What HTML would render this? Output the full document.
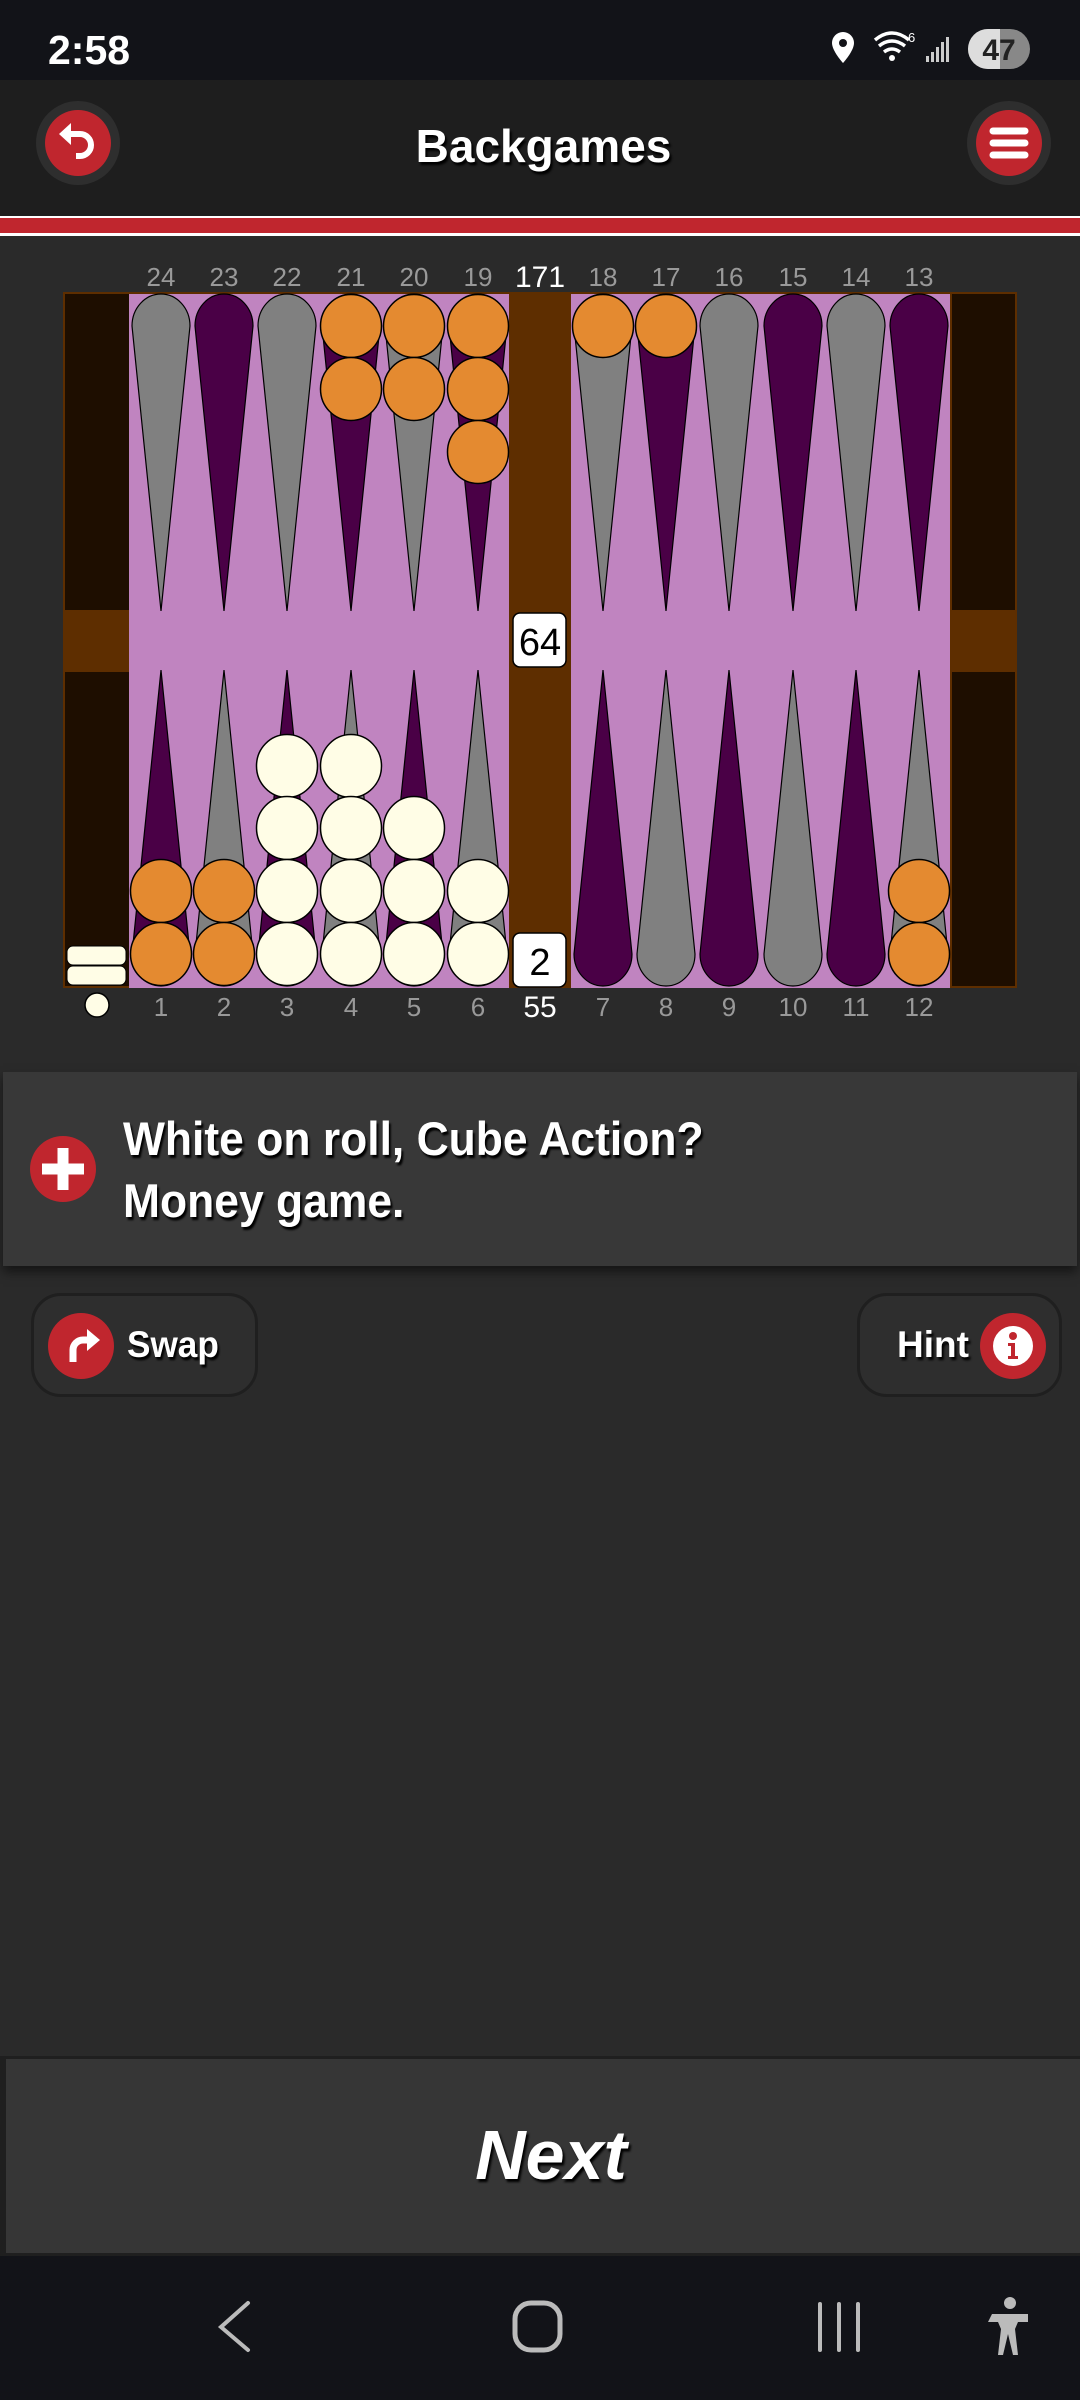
<!DOCTYPE html>
<html><head><meta charset="utf-8"><style>
*{margin:0;padding:0;box-sizing:border-box}
body{width:1080px;height:2400px;background:#2a2a2a;position:relative;overflow:hidden;font-family:"Liberation Sans",sans-serif;color:#fff}
.abs{position:absolute}
.sh{text-shadow:2px 3px 2px #000}
</style></head><body>
<div class="abs" style="left:0;top:0;width:1080px;height:80px;background:#121318"></div>
<div class="abs" style="left:48px;top:27px;font-size:41px;font-weight:bold">2:58</div>
<svg class="abs" style="left:820px;top:24px" width="240" height="50" viewBox="0 0 240 50">
<path d="M23 8a11 11 0 0 1 11 11c0 8-11 20-11 20S12 27 12 19A11 11 0 0 1 23 8z" fill="#fff"/><circle cx="23" cy="19" r="4" fill="#121318"/>
<path d="M55 16q17-14 34 0M59 22q13-10 26 0M64 28q8-6 16 0" stroke="#fff" stroke-width="3.5" fill="none"/><circle cx="72" cy="34" r="3" fill="#fff"/>
<text x="88" y="18" font-size="13" fill="#fff" font-family="Liberation Sans">6</text>
<path d="M106 38h3v-6h-3zM111 38h3v-10h-3zM116 38h3v-15h-3zM121 38h3v-20h-3zM126 38h3v-25h-3z" fill="#ccc"/>
<rect x="148" y="5" width="62" height="40" rx="20" fill="#888"/><path d="M168 5h12v40h-12a20 20 0 0 1 0-40z" fill="#ddd"/>
<text x="179" y="36" font-size="30" font-weight="bold" fill="#222" text-anchor="middle" font-family="Liberation Sans">47</text></svg>
<div class="abs" style="left:0;top:80px;width:1080px;height:136px;background:#1e1e1e"></div>
<svg class="abs" style="left:35px;top:100px" width="86" height="86"><circle cx="43" cy="43" r="42" fill="#2e2e2e"/><circle cx="43" cy="43" r="33" fill="#c0262e"/>
<path d="M33 34h12a11 11 0 0 1 0 22h-4" stroke="#fff" stroke-width="6" fill="none"/><path d="M24 34l12-11v22z" fill="#fff"/></svg>
<svg class="abs" style="left:966px;top:100px" width="86" height="86"><circle cx="43" cy="43" r="42" fill="#2e2e2e"/><circle cx="43" cy="43" r="33" fill="#c0262e"/>
<path d="M27 31h32M27 43h32M27 55h32" stroke="#fff" stroke-width="7" stroke-linecap="round"/></svg>
<div class="abs sh" style="left:0;width:1087px;top:119px;text-align:center;font-size:46px;font-weight:bold">Backgames</div>
<div class="abs" style="left:0;top:216px;width:1080px;height:2px;background:#fff"></div>
<div class="abs" style="left:0;top:218px;width:1080px;height:15px;background:#c0262e"></div>
<div class="abs" style="left:0;top:233px;width:1080px;height:3px;background:#fff"></div>

<svg class="abs" style="left:0;top:250px" width="1080" height="790" viewBox="0 250 1080 790" font-family="Liberation Sans">
<g font-size="26" fill="#999" text-anchor="middle">
<text x="161" y="286">24</text><text x="224" y="286">23</text><text x="287" y="286">22</text><text x="351" y="286">21</text><text x="414" y="286">20</text><text x="478" y="286">19</text>
<text x="603" y="286">18</text><text x="666" y="286">17</text><text x="729" y="286">16</text><text x="793" y="286">15</text><text x="856" y="286">14</text><text x="919" y="286">13</text>
<text x="161" y="1016">1</text><text x="224" y="1016">2</text><text x="287" y="1016">3</text><text x="351" y="1016">4</text><text x="414" y="1016">5</text><text x="478" y="1016">6</text>
<text x="603" y="1016">7</text><text x="666" y="1016">8</text><text x="729" y="1016">9</text><text x="793" y="1016">10</text><text x="856" y="1016">11</text><text x="919" y="1016">12</text>
</g>
<text x="540" y="287" font-size="30" fill="#fff" text-anchor="middle">171</text>
<text x="540" y="1017" font-size="30" fill="#fff" text-anchor="middle">55</text>
<rect x="63" y="292" width="954" height="696" fill="#5e2e00"/>
<rect x="65" y="294" width="64" height="316" fill="#1e0e00"/><rect x="65" y="672" width="64" height="314" fill="#1e0e00"/>
<rect x="952" y="294" width="63" height="316" fill="#1e0e00"/><rect x="952" y="672" width="63" height="314" fill="#1e0e00"/>
<rect x="129" y="294" width="380" height="694" fill="#c084c0"/><rect x="571" y="294" width="379" height="694" fill="#c084c0"/>
<g stroke="#000" stroke-width="1.2">
<path fill="#808080" d="M132 326A29 32 0 0 1 190 326L161 611Z"/><path fill="#4a0046" d="M195 326A29 32 0 0 1 253 326L224 611Z"/><path fill="#808080" d="M258 326A29 32 0 0 1 316 326L287 611Z"/><path fill="#4a0046" d="M322 326A29 32 0 0 1 380 326L351 611Z"/><path fill="#808080" d="M385 326A29 32 0 0 1 443 326L414 611Z"/><path fill="#4a0046" d="M449 326A29 32 0 0 1 507 326L478 611Z"/>
<path fill="#808080" d="M574 326A29 32 0 0 1 632 326L603 611Z"/><path fill="#4a0046" d="M637 326A29 32 0 0 1 695 326L666 611Z"/><path fill="#808080" d="M700 326A29 32 0 0 1 758 326L729 611Z"/><path fill="#4a0046" d="M764 326A29 32 0 0 1 822 326L793 611Z"/><path fill="#808080" d="M827 326A29 32 0 0 1 885 326L856 611Z"/><path fill="#4a0046" d="M890 326A29 32 0 0 1 948 326L919 611Z"/>
<path fill="#4a0046" d="M132 954A29 32 0 0 0 190 954L161 670Z"/><path fill="#808080" d="M195 954A29 32 0 0 0 253 954L224 670Z"/><path fill="#4a0046" d="M258 954A29 32 0 0 0 316 954L287 670Z"/><path fill="#808080" d="M322 954A29 32 0 0 0 380 954L351 670Z"/><path fill="#4a0046" d="M385 954A29 32 0 0 0 443 954L414 670Z"/><path fill="#808080" d="M449 954A29 32 0 0 0 507 954L478 670Z"/>
<path fill="#4a0046" d="M574 954A29 32 0 0 0 632 954L603 670Z"/><path fill="#808080" d="M637 954A29 32 0 0 0 695 954L666 670Z"/><path fill="#4a0046" d="M700 954A29 32 0 0 0 758 954L729 670Z"/><path fill="#808080" d="M764 954A29 32 0 0 0 822 954L793 670Z"/><path fill="#4a0046" d="M827 954A29 32 0 0 0 885 954L856 670Z"/><path fill="#808080" d="M890 954A29 32 0 0 0 948 954L919 670Z"/>
</g>
<g stroke="#000" stroke-width="1.5" fill="#e48a30">
<ellipse cx="351" cy="326" rx="30.5" ry="31.5"/><ellipse cx="351" cy="389" rx="30.5" ry="31.5"/>
<ellipse cx="414" cy="326" rx="30.5" ry="31.5"/><ellipse cx="414" cy="389" rx="30.5" ry="31.5"/>
<ellipse cx="478" cy="326" rx="30.5" ry="31.5"/><ellipse cx="478" cy="389" rx="30.5" ry="31.5"/><ellipse cx="478" cy="452" rx="30.5" ry="31.5"/>
<ellipse cx="603" cy="326" rx="30.5" ry="31.5"/><ellipse cx="666" cy="326" rx="30.5" ry="31.5"/>
<ellipse cx="161" cy="891" rx="30.5" ry="31.5"/><ellipse cx="161" cy="954" rx="30.5" ry="31.5"/>
<ellipse cx="224" cy="891" rx="30.5" ry="31.5"/><ellipse cx="224" cy="954" rx="30.5" ry="31.5"/>
<ellipse cx="919" cy="891" rx="30.5" ry="31.5"/><ellipse cx="919" cy="954" rx="30.5" ry="31.5"/>
</g>
<g stroke="#000" stroke-width="1.5" fill="#fffde6">
<ellipse cx="287" cy="766" rx="30.5" ry="31.5"/><ellipse cx="287" cy="828" rx="30.5" ry="31.5"/><ellipse cx="287" cy="891" rx="30.5" ry="31.5"/><ellipse cx="287" cy="954" rx="30.5" ry="31.5"/>
<ellipse cx="351" cy="766" rx="30.5" ry="31.5"/><ellipse cx="351" cy="828" rx="30.5" ry="31.5"/><ellipse cx="351" cy="891" rx="30.5" ry="31.5"/><ellipse cx="351" cy="954" rx="30.5" ry="31.5"/>
<ellipse cx="414" cy="828" rx="30.5" ry="31.5"/><ellipse cx="414" cy="891" rx="30.5" ry="31.5"/><ellipse cx="414" cy="954" rx="30.5" ry="31.5"/>
<ellipse cx="478" cy="891" rx="30.5" ry="31.5"/><ellipse cx="478" cy="954" rx="30.5" ry="31.5"/>
<rect x="67" y="946" width="59" height="19" rx="6" stroke-width="1"/><rect x="67" y="966" width="59" height="19" rx="6" stroke-width="1"/>
<circle cx="97" cy="1005" r="12"/>
</g>
<g stroke="#000" stroke-width="1.5" fill="#fff">
<rect x="513" y="613" width="53" height="54" rx="7"/><rect x="513" y="933" width="53" height="54" rx="7"/></g>
<text x="540" y="655" font-size="38" text-anchor="middle" fill="#000">64</text>
<text x="540" y="975" font-size="38" text-anchor="middle" fill="#000">2</text>
</svg>

<div class="abs" style="left:3px;top:1072px;width:1074px;height:194px;background:#383838;box-shadow:0 6px 10px rgba(0,0,0,.5)"></div>
<svg class="abs" style="left:29px;top:1135px" width="68" height="68"><circle cx="34" cy="34" r="33" fill="#c0262e"/><path d="M34 13v42M13 34h42" stroke="#fff" stroke-width="11"/></svg>
<div class="abs sh" style="left:123px;top:1108px;font-size:47px;font-weight:bold;line-height:62px;transform:scaleX(0.945);transform-origin:0 0;white-space:nowrap">White on roll, Cube Action?<br>Money game.</div>

<div class="abs" style="left:31px;top:1293px;width:227px;height:104px;border-radius:30px;background:#2e2e2e;border:3px solid #1f1f1f"></div>
<svg class="abs" style="left:47px;top:1312px" width="68" height="68"><circle cx="34" cy="34" r="33" fill="#c0262e"/><path d="M26 50V38a10 10 0 0 1 10-10h6" stroke="#fff" stroke-width="7" fill="none"/><path d="M40 17l13 11-13 11z" fill="#fff"/></svg>
<div class="abs sh" style="left:127px;top:1324px;font-size:37px;font-weight:bold;transform:scaleX(0.95);transform-origin:0 0">Swap</div>
<div class="abs" style="left:857px;top:1293px;width:205px;height:104px;border-radius:30px;background:#2e2e2e;border:3px solid #1f1f1f"></div>
<div class="abs sh" style="left:897px;top:1324px;font-size:37px;font-weight:bold">Hint</div>
<svg class="abs" style="left:979px;top:1312px" width="68" height="68"><circle cx="34" cy="34" r="33" fill="#c0262e"/><circle cx="34" cy="34" r="20" fill="#fff"/><circle cx="34" cy="24" r="4" fill="#c0262e"/><path d="M29 31h7v13h3v3h-10v-3h3v-10h-3z" fill="#c0262e"/></svg>

<div class="abs" style="left:0;top:2056px;width:1080px;height:200px;background:#1f1f1f"></div>
<div class="abs" style="left:6px;top:2059px;width:1074px;height:194px;background:#363636"></div>
<div class="abs sh" style="left:0;width:1102px;top:2115px;text-align:center;font-size:70px;font-weight:bold;font-style:italic">Next</div>
<div class="abs" style="left:0;top:2256px;width:1080px;height:144px;background:#121318"></div>
<svg class="abs" style="left:0;top:2256px" width="1080" height="144"><g stroke="#bbb" stroke-width="4" fill="none" stroke-linecap="round">
<path d="M248 47L221 71L248 94"/>
<rect x="515" y="47" width="45" height="47" rx="16" stroke-width="5"/>
<path d="M820 48v46M839 48v46M858 48v46"/></g>
<circle cx="1010" cy="47" r="6" fill="#bbb"/><path d="M992 58h36v8h-10l-3 7l3 26h-5l-5-21l-5 21h-5l3-26l-3-7h-10z" fill="#bbb"/></svg>
</body></html>
